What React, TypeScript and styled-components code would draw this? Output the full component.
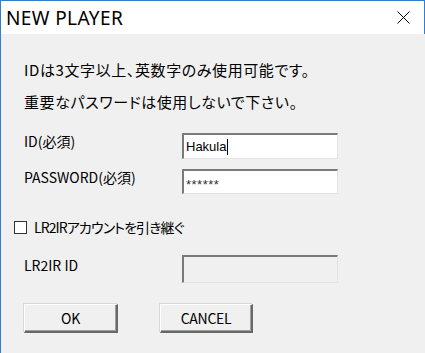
import React from 'react';
import styled, { createGlobalStyle } from 'styled-components';

const GlobalStyle = createGlobalStyle`
  html, body {
    margin: 0;
    padding: 0;
    background: #f0f0f0;
  }
  * {
    box-sizing: border-box;
  }
`;

const Window = styled.div`
  width: 425px;
  height: 353px;
  display: flex;
  flex-direction: column;
  background: #f0f0f0;
  border-left: 1px solid #2f7fcb;
  font-family: "Noto Sans CJK JP", "Noto Sans", sans-serif;
  color: #000;
  overflow: hidden;
`;

const TitleBar = styled.div`
  height: 34px;
  flex: none;
  display: flex;
  align-items: center;
  justify-content: space-between;
  background: #fff;
  border-top: 1px solid #2f7fcb;
  border-right: 1px solid #2f7fcb;
  padding: 0 14px 0 5px;
`;

const Title = styled.span`
  font-family: "Noto Sans", "Open Sans", sans-serif;
  font-size: 19px;
  letter-spacing: 0.4px;
`;

const CloseIcon = styled.svg`
  width: 13px;
  height: 13px;
  display: block;
`;

const Body = styled.div`
  flex: 1;
  display: flex;
  flex-direction: column;
  padding: 26px 0 0 23px;
`;

const Note = styled.div<{ $gap?: number }>`
  font-size: 15px;
  line-height: 20px;
  margin-top: ${(p) => p.$gap ?? 0}px;
  white-space: nowrap;
  font-feature-settings: "palt";
  letter-spacing: 0.6px;
`;

const FieldRow = styled.div<{ $gap: number }>`
  display: grid;
  grid-template-columns: 158px 156px;
  align-items: start;
  margin-top: ${(p) => p.$gap}px;
`;

const Label = styled.span<{ $offset?: number }>`
  font-size: 14px;
  line-height: 17px;
  padding-top: ${(p) => p.$offset ?? 0}px;
  white-space: nowrap;
`;

const TextBox = styled.div<{ $height: number; $disabled?: boolean }>`
  height: ${(p) => p.$height}px;
  display: flex;
  align-items: center;
  padding: 0 2px;
  background: ${(p) => (p.$disabled ? '#f0f0f0' : '#fff')};
  border-top: 2px solid #7a7a7a;
  border-left: 2px solid #7a7a7a;
  border-right: 1px solid #e3e3e3;
  border-bottom: 1px solid #e3e3e3;
  font-family: "Liberation Sans", sans-serif;
  font-size: 13px;
`;

const Caret = styled.span`
  display: inline-block;
  width: 1px;
  height: 16px;
  background: #000;
  margin-left: 1px;
`;

const Masked = styled.span`
  font-family: "Liberation Sans", sans-serif;
  font-size: 13px;
  letter-spacing: 0.5px;
  color: #333;
  position: relative;
  top: 2px;
`;

const CheckRow = styled.label`
  display: flex;
  align-items: center;
  gap: 7px;
  height: 20px;
  margin: 23px 0 0 -10px;
  font-size: 14px;
  font-feature-settings: "palt";
  letter-spacing: -0.9px;
`;

const CheckBox = styled.span`
  width: 13px;
  height: 13px;
  flex: none;
  background: #fff;
  border: 1px solid #333;
`;

const ButtonRow = styled.div`
  display: flex;
  gap: 42px;
  margin-top: 21px;
`;

const Button = styled.button<{ $width: number }>`
  width: ${(p) => p.$width}px;
  height: 29px;
  padding: 0;
  background: #f0f0f0;
  border-top: 1px solid #fff;
  border-left: 1px solid #fff;
  border-right: 2px solid #696969;
  border-bottom: 2px solid #696969;
  box-shadow: inset -1px -1px 0 #a0a0a0, -1px -1px 0 #d8d8d8;
  font-family: "Noto Sans CJK JP", "Noto Sans", sans-serif;
  font-size: 14px;
  letter-spacing: -0.3px;
  color: #000;
`;

export default function App() {
  return (
    <>
      <GlobalStyle />
      <Window>
        <TitleBar>
          <Title>NEW PLAYER</Title>
          <CloseIcon viewBox="0 0 13 13">
            <path d="M0.5 0.5 L12.5 12.5 M12.5 0.5 L0.5 12.5" stroke="#000" strokeWidth="1" fill="none" />
          </CloseIcon>
        </TitleBar>
        <Body>
          <Note>IDは3文字以上、英数字のみ使用可能です。</Note>
          <Note $gap={12}>重要なパスワードは使用しないで下さい。</Note>
          <FieldRow $gap={21}>
            <Label>ID(必須)</Label>
            <TextBox $height={26}>
              Hakula
              <Caret />
            </TextBox>
          </FieldRow>
          <FieldRow $gap={10}>
            <Label>PASSWORD(必須)</Label>
            <TextBox $height={25}>
              <Masked>******</Masked>
            </TextBox>
          </FieldRow>
          <CheckRow>
            <CheckBox />
            LR2IRアカウントを引き継ぐ
          </CheckRow>
          <FieldRow $gap={18}>
            <Label $offset={2}>LR2IR ID</Label>
            <TextBox $height={28} $disabled />
          </FieldRow>
          <ButtonRow>
            <Button $width={94}>OK</Button>
            <Button $width={93}>CANCEL</Button>
          </ButtonRow>
        </Body>
      </Window>
    </>
  );
}
